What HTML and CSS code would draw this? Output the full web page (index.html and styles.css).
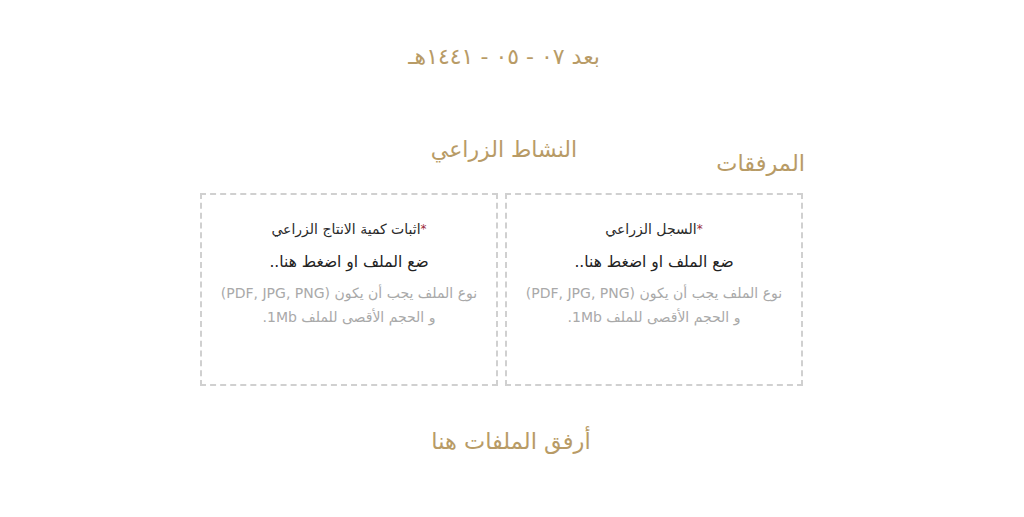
FILE: index.html
```html
<!DOCTYPE html>
<html lang="ar" dir="rtl">
<head>
<meta charset="utf-8">
<link rel="stylesheet" href="styles.css">
</head>
<body>
<main class="page">
  <p class="date">بعد ٠٧ - ٠٥ - ١٤٤١هـ</p>
  <section class="attachments">
    <div class="head">
      <h2 class="activity">النشاط الزراعي</h2>
      <h2 class="label">المرفقات</h2>
    </div>
    <div class="boxes">
      <div class="box">
        <h3 class="box-title"><span class="req">*</span>السجل الزراعي</h3>
        <p class="drop">ضع الملف او اضغط هنا..</p>
        <p class="hint">نوع الملف يجب أن يكون (PDF, JPG, PNG)<br>و الحجم الأقصى للملف 1Mb.</p>
      </div>
      <div class="box">
        <h3 class="box-title"><span class="req">*</span>اثبات كمية الانتاج الزراعي</h3>
        <p class="drop">ضع الملف او اضغط هنا..</p>
        <p class="hint">نوع الملف يجب أن يكون (PDF, JPG, PNG)<br>و الحجم الأقصى للملف 1Mb.</p>
      </div>
    </div>
    <p class="attach">أرفق الملفات هنا</p>
  </section>
</main>
</body>
</html>
```
FILE: styles.css
```css
* { box-sizing: border-box; }
html, body { margin: 0; padding: 0; background: #fff; }
body {
  font-family: "DejaVu Sans", sans-serif;
  color: #333;
}
.page {
  width: 1024px;
  height: 517px;
  overflow: hidden;
  display: flex;
  flex-direction: column;
  align-items: center;
}
.date {
  margin: 40px 0 0;
  padding-right: 16px;
  font-size: 22px;
  line-height: 34px;
  color: #b89b66;
}
.attachments {
  width: 606px;
  margin-top: 59px;
  margin-right: 20px;
  display: flex;
  flex-direction: column;
  align-items: center;
}
.head {
  width: 100%;
  display: grid;
}
.head h2 {
  grid-area: 1 / 1;
  margin: 0;
  font-weight: normal;
  color: #b89b66;
}
.activity {
  justify-self: center;
  font-size: 22px;
  line-height: 34px;
  padding-left: 4px;
}
.label {
  justify-self: start;
  font-size: 22.5px;
  line-height: 34px;
  padding-top: 13px;
}
.boxes {
  width: 603px;
  margin-left: 1px;
  margin-right: 2px;
  display: flex;
  gap: 7px;
  margin-top: 13px;
}
.box {
  width: 298px;
  height: 193px;
  border: 2px dashed #d0d0d0;
  padding-top: 20px;
  text-align: center;
}
.box-title {
  margin: 0;
  font-size: 14px;
  font-weight: normal;
  line-height: 28px;
  color: #2a2a2a;
}
.req { color: #9b2a3a; font-size: 12px; vertical-align: top; }
.drop {
  margin: 5px 0 0;
  font-size: 15.5px;
  line-height: 28px;
  color: #222;
}
.hint {
  margin: 5px 0 0;
  font-size: 14px;
  line-height: 24px;
  color: #a9a9a9;
}
.attach {
  margin: 38px 0 0;
  padding-left: 18px;
  font-size: 22.5px;
  line-height: 34px;
  color: #b89b66;
}
```
